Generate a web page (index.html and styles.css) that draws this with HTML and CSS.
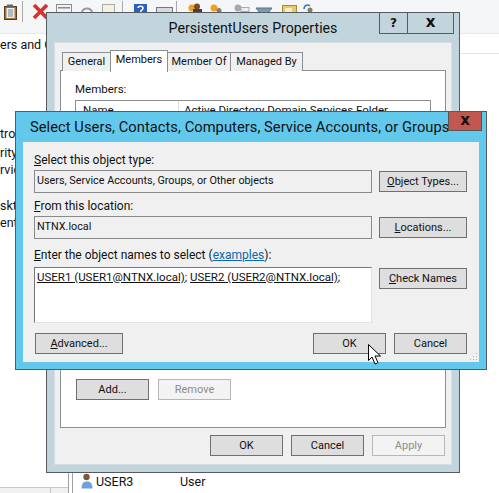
FILE: index.html
```html
<!DOCTYPE html>
<html>
<head>
<title>Select Users</title>
<meta charset="UTF-8">
<link rel="stylesheet" href="styles.css">
</head>
<body>
<div class="desktop">

  <div class="toolbar">
    <svg width="499" height="33" viewBox="0 0 499 33">
      <!-- clipboard -->
      <rect x="4.500" y="6.500" width="12" height="13" fill="#a8703a" stroke="#5a3a1c"/>
      <rect x="6.500" y="8" width="8" height="10" fill="#eef0ea"/>
      <rect x="7" y="4.500" width="6" height="3" fill="#666"/>
      <path d="M8 10h5M8 12h5M8 14h5M8 16h5" stroke="#6b8a9a"/>
      <path d="M22.500 1v21M176.500 1v12M122.500 1v12" stroke="#a9a9a9"/>
      <!-- delete -->
      <path d="M34 5l13 13M47 5L34 18" stroke="#d8322a" stroke-width="3.800"/>
      <!-- covered icons, only their tops show -->
      <rect x="56.500" y="4.500" width="15" height="9" fill="#f2f2f2" stroke="#8c8c8c"/>
      <rect x="58" y="7" width="12" height="1.500" fill="#8c8c8c"/>
      <path d="M82 13c0-6 10-6 10 0" fill="none" stroke="#999" stroke-width="2"/>
      <rect x="102.500" y="4.500" width="12" height="9" fill="#f6f3dc" stroke="#aaa"/>
      <rect x="134" y="4" width="13" height="9" fill="#2a5fbf"/>
      <path d="M138 8c0-2.500 5-2.500 5 0s-2.500 2-2.500 4" fill="none" stroke="#fff" stroke-width="1.500"/>
      <rect x="156.500" y="7.500" width="16" height="6" fill="#d6dbe2" stroke="#6d7a8c"/>
      <circle cx="192" cy="8" r="3.500" fill="#f0a020"/>
      <circle cx="197" cy="6.500" r="3" fill="#7a4a24"/>
      <rect x="193" y="9" width="9" height="4" fill="#4b4038"/>
      <circle cx="214" cy="8" r="3.500" fill="#f0a020"/>
      <circle cx="219" cy="10.500" r="2.500" fill="#8a7a66"/>
      <circle cx="238" cy="8" r="3.500" fill="#a8a8a8"/>
      <rect x="241" y="7.500" width="8" height="4" fill="#eee" stroke="#aaa"/>
      <path d="M256 8h16l-4 5h-8z" fill="#7d9ab5" stroke="#56708a"/>
      <rect x="282.500" y="5.500" width="14" height="8" fill="#e9c867" stroke="#a88a30"/>
      <rect x="285" y="8" width="7" height="5" fill="#f7efc8"/>
      <path d="M304 9c0-4 4-5 6-3" fill="none" stroke="#2a7ad0" stroke-width="1.500"/>
      <circle cx="310" cy="10" r="2.500" fill="#8a7a66"/>
    </svg>
  </div>

  <div class="bg-list"><span>ers and C</span></div>
  <div class="bg-head-line"></div>

  <div class="bg-frag f1">tro</div>
  <div class="bg-frag f2">rity</div>
  <div class="bg-frag f3">rvic</div>
  <div class="bg-frag f4">skt</div>
  <div class="bg-frag f5">entl</div>

  <div class="pane-edge"></div>
  <div class="h-scroll"><span class="h-scroll-btn"></span></div>

  <div class="user-row">
    <svg width="12" height="16" viewBox="0 0 12 16"><circle cx="5.500" cy="4" r="3.200" fill="#7b5a3c"/><path d="M0.500 15.500c0-6 2.500-7 5.500-7s5.500 1 5.500 7z" fill="#6fa3d8"/></svg>
    <span class="user-name">USER3</span>
    <span class="user-type">User</span>
  </div>

  <!-- properties dialog, behind -->
  <div class="win win-back">
    <div class="back-title">
      <span class="back-title-text">PersistentUsers Properties</span>
      <div class="back-btns">
        <span class="cap-btn cap-help">?</span>
        <span class="cap-btn cap-close">x</span>
      </div>
    </div>
    <div class="back-client">
      <div class="tabs">
        <span class="tab tab-general">General</span>
        <span class="tab tab-on">Members</span>
        <span class="tab tab-of">Member Of</span>
        <span class="tab tab-by">Managed By</span>
      </div>
      <div class="tab-page">
        <div class="members-label">Members:</div>
        <div class="members-list">
          <span class="col col-name">Name</span>
          <span class="col">Active Directory Domain Services Folder</span>
        </div>
        <div class="members-btns">
          <span class="btn btn-wide">Add...</span>
          <span class="btn btn-wide btn-off">Remove</span>
        </div>
      </div>
      <div class="back-foot">
        <span class="btn btn-wide">OK</span>
        <span class="btn btn-wide">Cancel</span>
        <span class="btn btn-wide btn-off">Apply</span>
      </div>
    </div>
  </div>

  <!-- select users dialog, in front -->
  <div class="win win-front">
    <div class="front-title">
      <span class="front-title-text">Select Users, Contacts, Computers, Service Accounts, or Groups</span>
      <span class="front-close">x</span>
    </div>
    <div class="front-client">
      <div class="field-label"><u>S</u>elect this object type:</div>
      <div class="field-row">
        <div class="field">Users, Service Accounts, Groups, or Other objects</div>
        <span class="btn btn-side"><u>O</u>bject Types...</span>
      </div>
      <div class="field-label"><u>F</u>rom this location:</div>
      <div class="field-row">
        <div class="field">NTNX.local</div>
        <span class="btn btn-side"><u>L</u>ocations...</span>
      </div>
      <div class="field-label names-label"><u>E</u>nter the object names to select (<a class="link">examples</a>):</div>
      <div class="field-row names-row">
        <div class="names"><u>USER1 (USER1@NTNX.local)</u>; <u>USER2 (USER2@NTNX.local)</u>;</div>
        <span class="btn btn-side"><u>C</u>heck Names</span>
      </div>
      <div class="front-foot">
        <span class="btn btn-side"><u>A</u>dvanced...</span>
        <span class="foot-right">
          <span class="btn btn-wide btn-default">OK</span>
          <span class="btn btn-wide">Cancel</span>
        </span>
      </div>
      <svg class="grip" width="8" height="8" viewBox="0 0 8 8"><path d="M6 0h1v1H6zM3 3h1v1H3zM6 3h1v1H6zM0 6h1v1H0zM3 6h1v1H3zM6 6h1v1H6z" fill="#aeb4b8"/></svg>
    </div>
  </div>

  <svg class="pointer" width="14" height="23" viewBox="0 0 14 23"><path d="M0.500 0.500v16l3.500-3.500 3 7 3-1.300-3-6.700h5.500z" fill="#fff" stroke="#000"/></svg>
</div>
</body>
</html>
```

FILE: styles.css
```css
body
{
	margin:0;
	padding:0;
	background-color:white;
	font-family:Roboto,sans-serif;
	font-size:11.5px;
	color:#111;
}

.desktop
{
	position:relative;
	width:499px;
	height:493px;
	overflow:hidden;
	background-color:white;
}

.toolbar
{
	height:33px;
	background-color:#f5f6f7;
	border-bottom:1px solid #dfe9f7;
}

.toolbar svg { display:block; }

.bg-list
{
	padding-top:3px;
	font-size:12.5px;
}

.bg-head-line
{
	position:absolute;
	left:459px;
	right:0;
	top:53px;
	height:1px;
	background-color:#e5e5e5;
}

.bg-frag
{
	position:absolute;
	left:0;
	font-size:12.5px;
}
.f1 { top:126px; }
.f2 { top:145px; }
.f3 { top:162px; }
.f4 { top:198px; }
.f5 { top:215px; }

.pane-edge
{
	position:absolute;
	left:68px;
	top:473px;
	bottom:0;
	width:3px;
	border-left:1px solid #a0a0a0;
	border-right:1px solid #a0a0a0;
}

.h-scroll
{
	position:absolute;
	left:0;
	top:487px;
	width:68px;
	height:6px;
	border-top:1px solid #c8c8c8;
	background-color:#f0f0f0;
}

.h-scroll-btn
{
	display:block;
	margin-left:50px;
	width:17px;
	height:6px;
	border-left:1px solid #c8c8c8;
}

.user-row
{
	position:absolute;
	left:81px;
	top:473px;
	display:flex;
	align-items:center;
	font-size:12.5px;
}
.user-name { margin-left:3px; width:84px; }

.win
{
	position:absolute;
	box-sizing:border-box;
	border:1px solid #555b60;
	display:flex;
	flex-direction:column;
}

.win-back
{
	left:46px;
	top:12px;
	width:414px;
	height:461px;
	background-color:#c3d5dc;
	padding:0 7px 7px 7px;
}

.back-title
{
	height:29px;
	position:relative;
	display:flex;
	justify-content:center;
	align-items:center;
	font-size:14.2px;
	box-sizing:border-box;
}

.back-btns
{
	position:absolute;
	top:0;
	right:-2px;
	display:flex;
	border:1px solid #555b60;
	border-top:none;
}

.cap-btn
{
	height:20px;
	display:flex;
	align-items:center;
	justify-content:center;
	font-weight:bold;
	font-family:"DejaVu Sans",sans-serif;
}
.cap-help { width:27px; border-right:1px solid #555b60; font-size:12px; }
.cap-close { width:45px; font-size:15px; padding-bottom:2px; height:18px; }

.back-client
{
	flex:1;
	background-color:#f0f0f0;
	border:1px solid #d5dfe3;
	padding:8px 5px 8px 5px;
	display:flex;
	flex-direction:column;
	min-height:0;
}

.tabs
{
	display:flex;
	align-items:flex-end;
	padding-left:2px;
	height:20px;
	margin-bottom:-1px;
	position:relative;
	z-index:1;
	font-size:11px;
}

.tab
{
	height:19px;
	box-sizing:border-box;
	border:1px solid #8a8f94;
	border-bottom:none;
	margin-right:-1px;
	line-height:18px;
	text-align:center;
	background-color:#f0f0f0;
}
.tab-general { width:49px; }
.tab-of { width:64px; }
.tab-by { width:73px; }

.tab-on
{
	width:58px;
	height:22px;
	margin-bottom:-1px;
	background-color:white;
	line-height:18px;
}

.tab-page
{
	flex:1;
	background-color:white;
	border:1px solid #8a8f94;
	padding:11px 14px 0 14px;
	display:flex;
	flex-direction:column;
}

.members-label { height:18px; }

.members-list
{
	border:1px solid #8a8f94;
	height:265px;
	flex:none;
	display:flex;
	padding-left:2px;
	box-sizing:border-box;
}
.col { padding:2px 5px; }
.col-name { width:90px; border-right:1px solid #ddd; }

.members-btns
{
	display:flex;
	gap:9px;
	margin-top:14px;
	padding-left:1px;
}

.back-foot
{
	display:flex;
	justify-content:flex-end;
	gap:8px;
	margin-top:7px;
	margin-right:1px;
}

.btn
{
	box-sizing:border-box;
	display:flex;
	align-items:center;
	justify-content:center;
	background-color:#dedede;
	border:1px solid #707070;
	height:21px;
	white-space:pre;
	font-size:11px;
}
.btn-wide { width:73px; }
.btn-side { width:88px; }
.btn-off { background-color:#f3f3f3; border-color:#b4b8b8; color:#8d8d8d; }
.btn-default { border-color:#3d7bad; }

.win-front
{
	left:15px;
	top:111px;
	width:472px;
	height:259px;
	background-color:#62c8ec;
	padding:0 7px 7px 7px;
}

.front-title
{
	height:30px;
	position:relative;
	display:flex;
	align-items:center;
	font-size:14.7px;
	letter-spacing:0.05px;
	padding-left:7px;
	box-sizing:border-box;
}

.front-close
{
	position:absolute;
	top:0;
	right:-3px;
	width:34px;
	height:19px;
	padding-bottom:2px;
	background-color:#c1584f;
	border:1px solid #555;
	border-top:none;
	box-sizing:border-box;
	display:flex;
	align-items:center;
	justify-content:center;
	font-weight:bold;
	font-family:"DejaVu Sans",sans-serif;
	font-size:15px;
	letter-spacing:0;
}

.front-client
{
	flex:1;
	position:relative;
	background-color:#f0f0f0;
	padding:9px 12px 0 11px;
	display:flex;
	flex-direction:column;
}

.field-label { height:19px; line-height:18px; font-size:12px; }
.names-label { margin-top:14px; }

.field-row
{
	display:flex;
	justify-content:space-between;
	align-items:flex-start;
	height:28px;
}
.field-row .btn-side { margin-top:1px; }

.field
{
	box-sizing:border-box;
	width:338px;
	height:23px;
	border:1px solid #8a8a8a;
	padding:0 2px;
	line-height:20px;
	font-size:10.8px;
	background-color:#f0f0f0;
}

.field-row + .field-label { margin-top:-1px; }
.field-row + .names-label { margin-top:2px; }

.names-row { height:57px; margin-top:2px; }

.names
{
	box-sizing:border-box;
	width:338px;
	height:56px;
	background-color:white;
	border:1px solid #e2e2e2;
	border-top:1px solid #777;
	border-left:1px solid #777;
	padding:0 2px;
	line-height:18px;
}

.link { color:#0b66b2; text-decoration:underline; }

.front-foot
{
	display:flex;
	justify-content:space-between;
	margin-top:9px;
	padding-left:1px;
}

.foot-right { display:flex; gap:8px; }

.grip
{
	position:absolute;
	right:1px;
	bottom:1px;
}

.pointer
{
	position:absolute;
	left:368px;
	top:344px;
}
```
